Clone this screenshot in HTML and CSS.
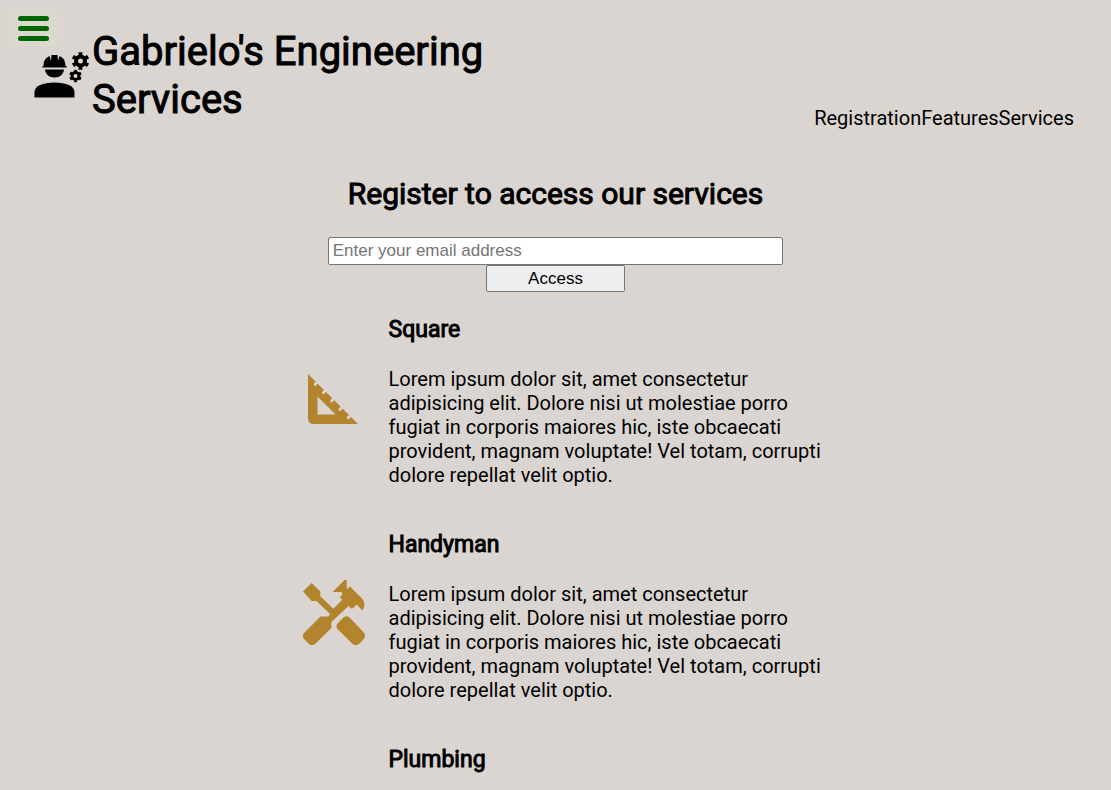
FILE: index.html
```html
<!DOCTYPE html>
<html lang="en">
<head>
<meta charset="utf-8">
<meta name="viewport" content="width=device-width, initial-scale=1">
<title>Gabrielo's Engineering Services</title>
<link rel="stylesheet" href="styles.css">
</head>
<body>
<button class="menu-button" type="button" aria-label="Menu"><span class="bar"></span><span class="bar"></span><span class="bar"></span></button>
<header class="header">
  <div class="brand">
    <svg class="logo" viewBox="0 0 56 48" aria-hidden="true">
      <path d="M.5 45.500V40C.5 34 9 30.500 20.500 30.500S40.500 34 40.500 40V45.500Z"/>
      <path d="M8.500 15.500V14H9.500C9.500 8.500 12 5.500 15.500 4L17 9L17.500 3H23.500L24 9L25.500 4C29 5.500 31.500 8.500 31.500 14H32.500V15.500Z"/>
      <path d="M11 17.500H30C29.500 22 26 25.500 20.500 25.500S11.500 22 11 17.500Z"/>
      <circle class="gear" cx="46.500" cy="9" r="4.500"/>
      <circle class="teeth" cx="46.500" cy="9" r="7.300" pathLength="12"/>
      <circle class="gear small" cx="41.500" cy="24" r="3.500"/>
      <circle class="teeth small" cx="41.500" cy="24" r="5.300" pathLength="12"/>
    </svg>
    <h1 class="title">Gabrielo's Engineering Services</h1>
  </div>
  <nav class="nav"><a href="#registration">Registration</a><a href="#features">Features</a><a href="#services">Services</a></nav>
</header>
<main>
  <section class="register" id="registration">
    <h2 class="register-title">Register to access our services</h2>
    <form class="form">
      <input class="email" type="email" placeholder="Enter your email address" aria-label="Email address">
      <button class="submit" type="submit">Access</button>
    </form>
  </section>
  <section class="features" id="features">
    <article class="feature">
      <svg class="icon" viewBox="0 1 66 68" aria-hidden="true">
        <mask id="ruler-marks">
          <rect width="66" height="70" fill="#fff"/>
          <path d="M14 17.500L18 13.500M22.300 25.800L26.300 21.800M30.600 34.100L34.600 30.100M38.900 42.400L42.900 38.400M47.200 50.700L51.200 46.700" stroke="#000" stroke-width="2.800" stroke-linecap="round"/>
        </mask>
        <path mask="url(#ruler-marks)" fill-rule="evenodd" d="M7 7L57 57H13Q7 57 7 51ZM16.500 29.500V47.500H34.500Z"/>
      </svg>
      <div class="copy"><h3>Square</h3><p>Lorem ipsum dolor sit, amet consectetur adipisicing elit. Dolore nisi ut molestiae porro fugiat in corporis maiores hic, iste obcaecati provident, magnam voluptate! Vel totam, corrupti dolore repellat velit optio.</p></div>
    </article>
    <article class="feature">
      <svg class="icon" viewBox="0 4 66 68" aria-hidden="true">
        <path d="M2 12.500L10.700 4L19.300 12.500V17.200L32.300 29.800L41.300 20.800L38.700 18.200L41.300 15.800L40.700 13H32V12.500L43.500 1Q45.700 0 45.700 2V10.500L49 7.500L61.300 19.800Q65.500 26 61.300 31.500L55.700 25.500L51.500 29.500H50L47.500 27L30.300 43V49L14.700 64.500Q11 68 7.500 64.500L3.500 60.500Q0 57 3.500 53.500L19.500 37.500H27.300L29 35L15.500 22H10.700Z"/>
        <path d="M36 45L43 38Q45.500 36.500 48 38L62 52.500Q66 57 62 61L58.500 64.500Q55 68 51 64.500L36 49.500Q34.500 47.500 36 45Z"/>
      </svg>
      <div class="copy"><h3>Handyman</h3><p>Lorem ipsum dolor sit, amet consectetur adipisicing elit. Dolore nisi ut molestiae porro fugiat in corporis maiores hic, iste obcaecati provident, magnam voluptate! Vel totam, corrupti dolore repellat velit optio.</p></div>
    </article>
    <article class="feature">
      <svg class="icon" viewBox="0 0 66 68" aria-hidden="true">
        <path d="M8 8H28V16H44Q58 16 58 30V44H42V32H28V40H8Z"/>
      </svg>
      <div class="copy"><h3>Plumbing</h3><p>Lorem ipsum dolor sit, amet consectetur adipisicing elit. Dolore nisi ut molestiae porro fugiat in corporis maiores hic, iste obcaecati provident, magnam voluptate! Vel totam, corrupti dolore repellat velit optio.</p></div>
    </article>
  </section>
</main>
</body>
</html>
```
FILE: styles.css
```css
* { box-sizing: border-box; }
html { scrollbar-width: none; }
body {
  margin: 0;
  background: #dad5d0;
  color: #000;
  font: 400 20px/24px Roboto, sans-serif;
}
h1, h2, h3, p { margin: 0; }
h1, h2, h3 { font-weight: 400; -webkit-text-stroke: 1px #000; }
.menu-button {
  position: absolute;
  top: 9px;
  left: 9px;
  display: flex;
  flex-direction: column;
  gap: 5px;
  padding: 7px 9px 5px;
  border: 0;
  background: #ddd8cf;
}
.bar {
  width: 31px;
  height: 5px;
  border-radius: 3px;
  background: #060;
}
.header {
  display: flex;
  justify-content: space-between;
  align-items: flex-end;
  padding: 28px 37px 0 34px;
}
.brand {
  display: flex;
  align-items: center;
  gap: 2px;
  width: 47%;
}
.logo { width: 56px; height: 48px; flex: none; }
.gear { fill: none; stroke: #000; stroke-width: 4px; }
.gear.small { stroke-width: 3px; }
.teeth { fill: none; stroke: #000; stroke-width: 3px; stroke-dasharray: 1 1; stroke-dashoffset: 1.500; }
.teeth.small { stroke-width: 2px; }
.title { font-size: 40px; line-height: 48px; }
.nav { display: flex; margin-bottom: -6px; }
.nav a { color: inherit; text-decoration: none; }
.register { padding-top: 52px; }
.register-title { font-size: 30px; line-height: 36px; text-align: center; }
.form {
  display: flex;
  flex-direction: column;
  align-items: center;
  margin-top: 25px;
}
.email, .submit {
  border: 1px solid #767676;
  border-radius: 2px;
  font: 400 17px/20px "Liberation Sans", Arial, sans-serif;
}
.email { width: 41%; height: 28px; padding: 3px 4px; background: #fff; }
.email::placeholder { color: #757575; opacity: 1; }
.submit { width: 139px; height: 27px; padding: 0; background: #efefef; color: #000; }
.features { width: 510px; max-width: 100%; margin: 24px auto 0; }
.feature { display: flex; align-items: center; gap: 22px; margin: 0 -16px 44px 0; }
.icon { width: 66px; height: 68px; flex: none; overflow: visible; fill: #b3842e; }
.copy h3 { margin-bottom: 23px; font-size: 23px; line-height: 28px; }
```
